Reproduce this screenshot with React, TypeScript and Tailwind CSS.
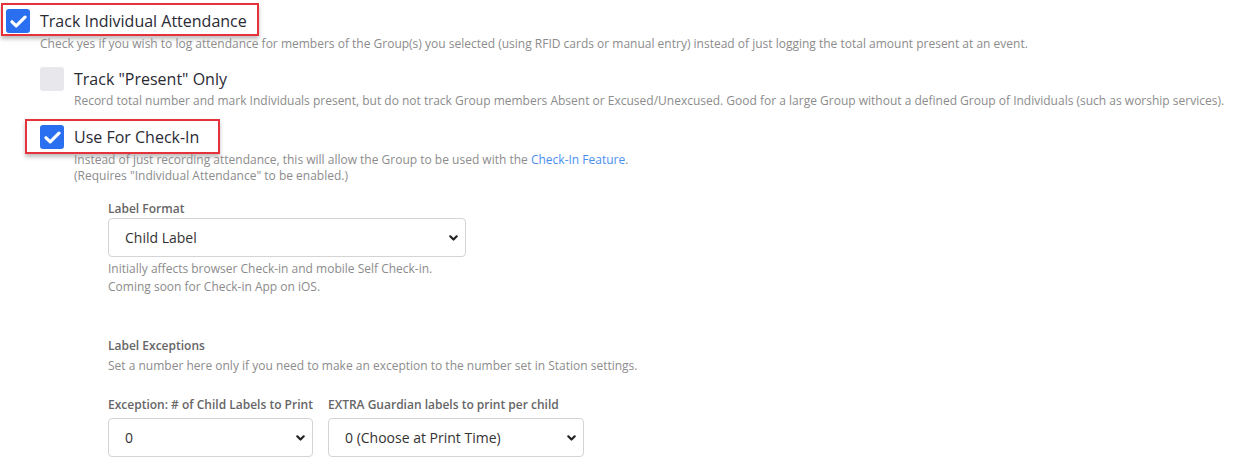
import React from 'react';

const Check: React.FC<{ on?: boolean }> = ({ on }) =>
  on ? (
    <div className="w-6 h-6 shrink-0 rounded-[3px] bg-[#2a6ff0] flex items-center justify-center">
      <svg width="17" height="13" viewBox="0 0 17 13" fill="none">
        <path d="M2 6.8 L6.2 10.8 L15 2.2" stroke="white" strokeWidth="3.2" strokeLinecap="round" strokeLinejoin="round" />
      </svg>
    </div>
  ) : (
    <div className="w-6 h-6 shrink-0 rounded-[3px] bg-[#e8e8ec]" />
  );

const Select: React.FC<{ value: string; className: string }> = ({ value, className }) => (
  <div className={`relative h-[39px] ${className}`}>
    <select
      defaultValue={value}
      className="appearance-none w-full h-full border border-[#d4d4d4] rounded-[4px] bg-white pl-[16px] pr-8 text-[14px] text-[#333] outline-none"
    >
      <option>{value}</option>
    </select>
    <svg
      className="absolute right-[8px] top-1/2 -translate-y-1/2 pointer-events-none"
      width="9" height="6" viewBox="0 0 9 6" fill="none"
    >
      <path d="M1.3 1.3 L4.5 4.5 L7.7 1.3" stroke="#222" strokeWidth="2.2" strokeLinecap="round" strokeLinejoin="round" />
    </svg>
  </div>
);

export default function App() {
  return (
    <div className="w-[1237px] h-[465px] overflow-hidden bg-white font-['Open_Sans',sans-serif] text-[#2a2a35]">
      <div className="pt-[3px]">
        {/* Track Individual Attendance */}
        <div className="ml-[1px] w-[258px] h-[33px] border-2 border-[#e5333c] pl-[3px] pt-[4px] flex items-start gap-[10px] shadow-[0_3px_4px_rgba(0,0,0,0.25)]">
          <Check on />
          <span className="text-[16px] leading-[24px]">Track Individual Attendance</span>
        </div>
        <p className="pl-[40px] text-[12px] leading-[16px] text-[#8c8c8c]">
          Check yes if you wish to log attendance for members of the Group(s) you selected (using RFID cards or manual entry) instead of just logging the total amount present at an event.
        </p>

        {/* Track Present Only */}
        <div className="mt-[15px] pl-[40px] flex items-center gap-[10px] h-6">
          <Check />
          <span className="text-[16px] leading-[24px]">Track "Present" Only</span>
        </div>
        <p className="mt-[2px] pl-[74px] text-[12px] leading-[16px] text-[#8c8c8c] whitespace-nowrap">
          Record total number and mark Individuals present, but do not track Group members Absent or Excused/Unexcused. Good for a large Group without a defined Group of Individuals (such as worship services).
        </p>

        {/* Use For Check-In */}
        <div className="mt-[10px] ml-[25px] w-[195px] h-[35px] border-2 border-[#e5333c] pl-[13px] pt-[4px] flex items-start gap-[10px] shadow-[0_3px_4px_rgba(0,0,0,0.25)]">
          <Check on />
          <span className="text-[16px] leading-[24px]">Use For Check-In</span>
        </div>
        <div className="-mt-[2px] pl-[74px] text-[12px] leading-[16px] text-[#8c8c8c]">
          <p>
            Instead of just recording attendance, this will allow the Group to be used with the{' '}
            <span className="text-[#4a8ff0]">Check-In Feature</span>.
          </p>
          <p>(Requires "Individual Attendance" to be enabled.)</p>
        </div>

        {/* Label settings */}
        <div className="pl-[108px]">
          <div className="mt-[17px] text-[12px] leading-[16px] font-semibold text-[#666]">Label Format</div>
          <Select value="Child Label" className="mt-[1px] w-[358px]" />
          <div className="mt-[3px] text-[12px] leading-[18px] text-[#8c8c8c]">
            <p>Initially affects browser Check-in and mobile Self Check-in.</p>
            <p>Coming soon for Check-in App on iOS.</p>
          </div>

          <div className="mt-[42px] text-[12px] leading-[16px] font-semibold text-[#666]">Label Exceptions</div>
          <p className="mt-[4px] text-[12px] leading-[16px] text-[#8c8c8c]">
            Set a number here only if you need to make an exception to the number set in Station settings.
          </p>

          <div className="mt-[23px] flex gap-[15px]">
            <div className="w-[205px]">
              <div className="text-[12px] leading-[16px] font-semibold text-[#666] whitespace-nowrap">Exception: # of Child Labels to Print</div>
              <Select value="0" className="mt-[5px] w-[205px]" />
            </div>
            <div className="w-[256px]">
              <div className="text-[12px] leading-[16px] font-semibold text-[#666] whitespace-nowrap">EXTRA Guardian labels to print per child</div>
              <Select value="0 (Choose at Print Time)" className="mt-[5px] w-[256px]" />
            </div>
          </div>
        </div>
      </div>
    </div>
  );
}
